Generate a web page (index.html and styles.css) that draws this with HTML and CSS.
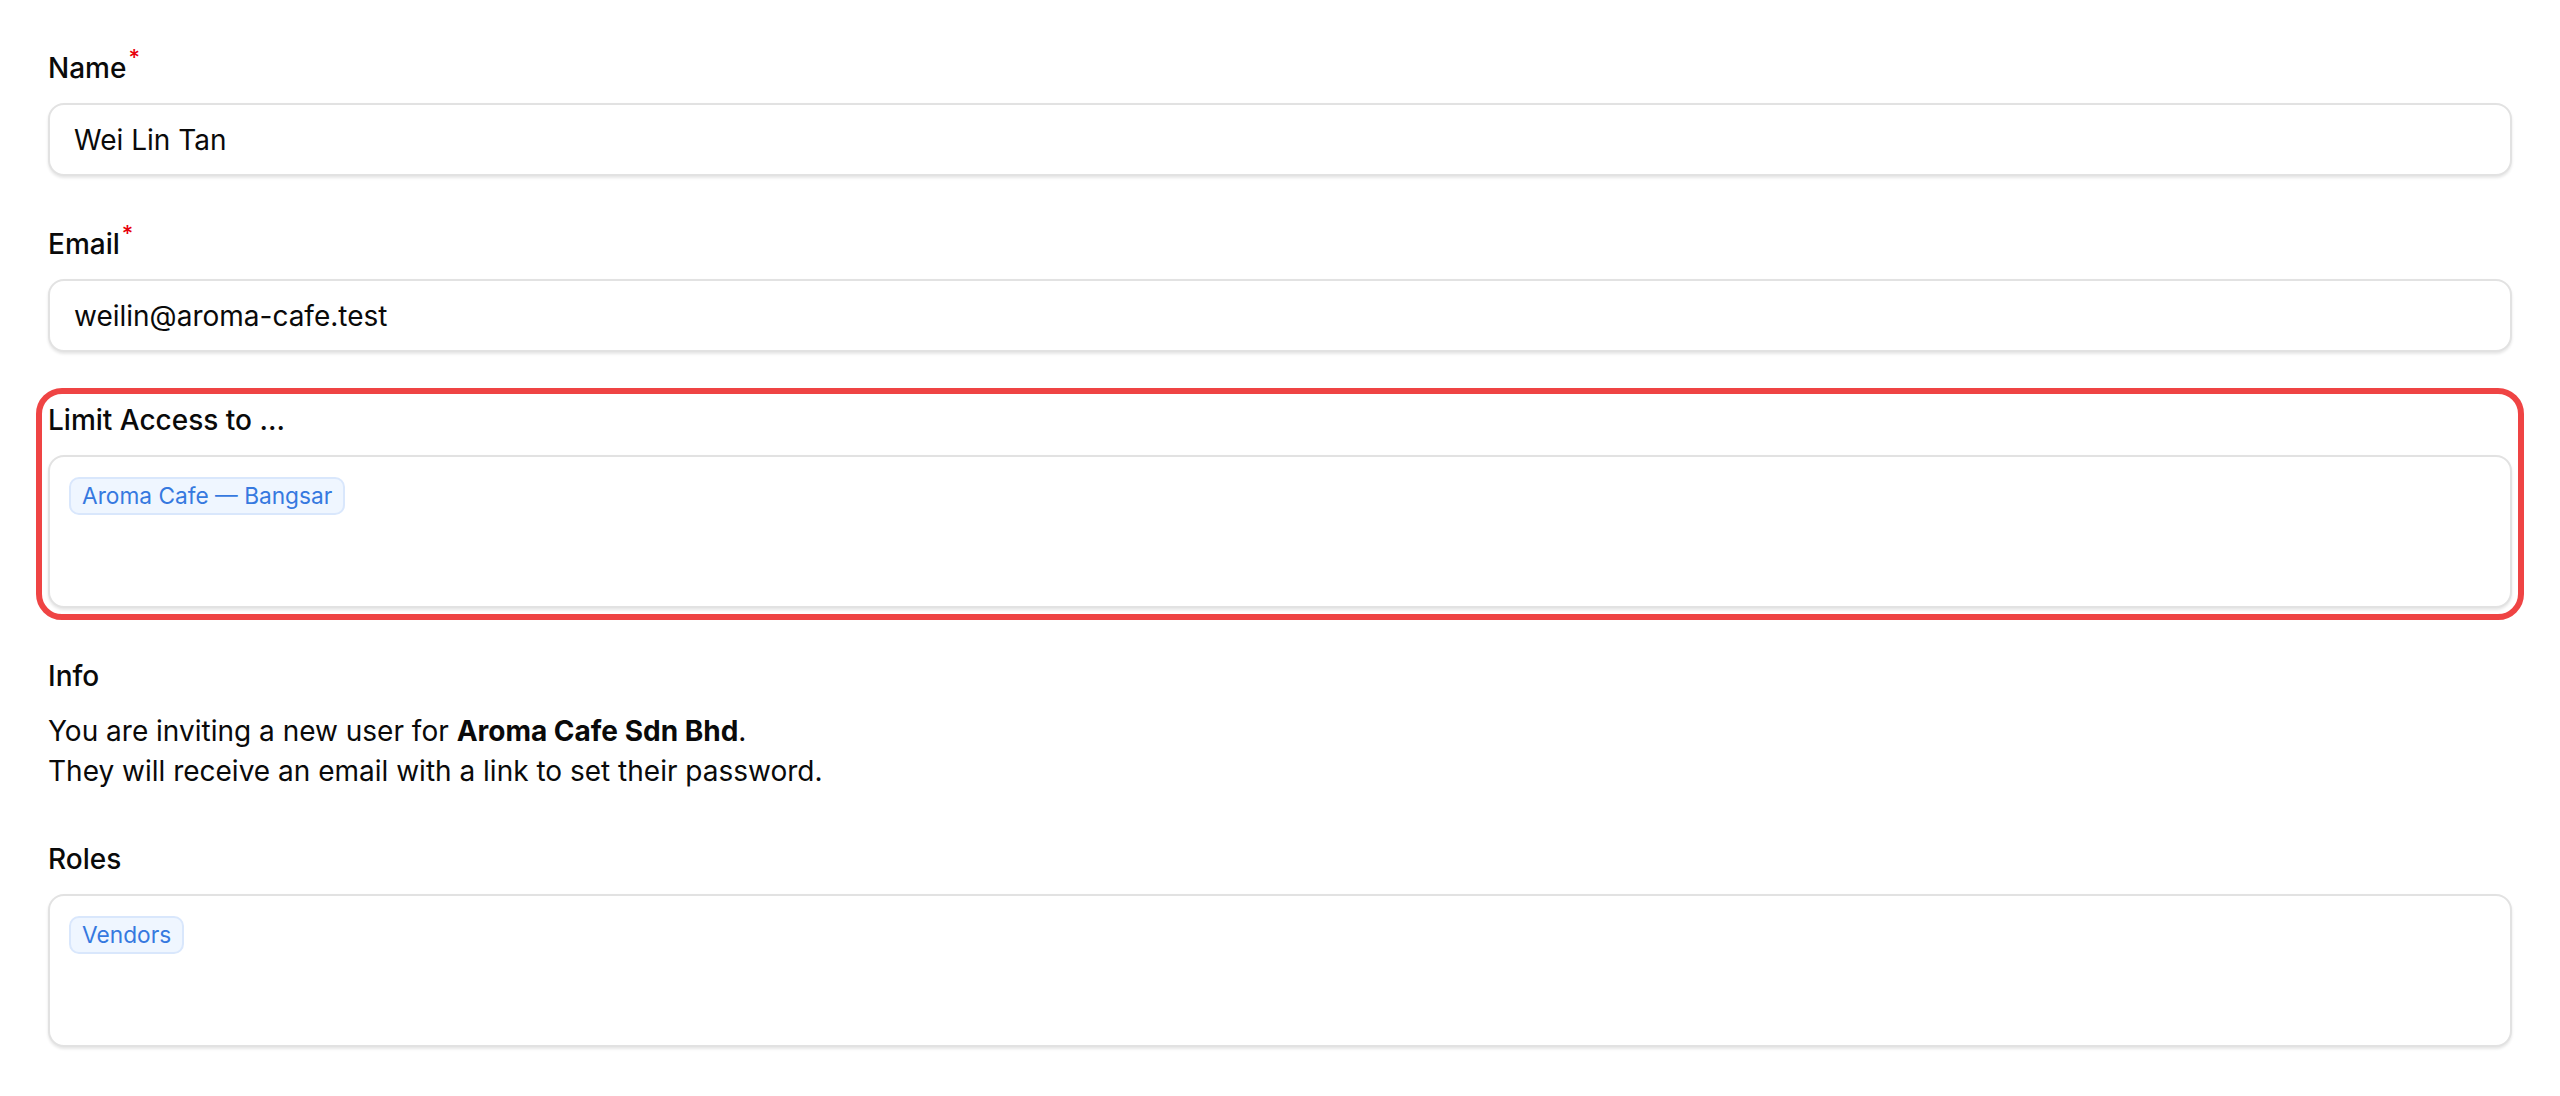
FILE: index.html
```html
<!DOCTYPE html>
<html lang="en">
<head>
<meta charset="utf-8">
<title>Invite user</title>
<link rel="stylesheet" href="styles.css">
</head>
<body>
<form class="form">
  <div class="field">
    <label class="label">Name<sup class="req">*</sup></label>
    <div class="input">Wei Lin Tan</div>
  </div>
  <div class="field">
    <label class="label">Email<sup class="req">*</sup></label>
    <div class="input">weilin@aroma-cafe.test</div>
  </div>
  <div class="field highlight">
    <label class="label">Limit Access to ...</label>
    <div class="multi">
      <span class="tag">Aroma Cafe — Bangsar</span>
    </div>
  </div>
  <div class="field">
    <div class="label">Info</div>
    <p class="info">You are inviting a new user for <strong>Aroma Cafe Sdn Bhd</strong>.<br>They will receive an email with a link to set their password.</p>
  </div>
  <div class="field">
    <label class="label">Roles</label>
    <div class="multi">
      <span class="tag">Vendors</span>
    </div>
  </div>
</form>
</body>
</html>
```

FILE: styles.css
```css
* { box-sizing: border-box; }

html, body {
  margin: 0;
  background: #ffffff;
}

body {
  font-family: Inter, "Noto Sans", "Liberation Sans", sans-serif;
  color: #0a0a0a;
}

.form {
  display: flex;
  flex-direction: column;
  gap: 48px;
  padding: 48px;
}

.field {
  display: flex;
  flex-direction: column;
  gap: 15px;
}

.label {
  display: block;
  font-size: 28px;
  line-height: 40px;
  font-weight: 500;
  color: #0a0a0a;
}

.req {
  color: #e7000b;
  font-size: 22px;
  line-height: 0;
  vertical-align: 0;
  position: relative;
  top: -13px;
  margin-left: 2px;
}

.input {
  height: 73px;
  border: 2px solid #e2e2e2;
  border-radius: 16px;
  box-shadow: 0 2px 3px rgba(0, 0, 0, 0.1);
  padding: 0 24px;
  display: flex;
  align-items: center;
  font-size: 28px;
  color: #0a0a0a;
  background: #ffffff;
}

.multi {
  height: 153px;
  border: 2px solid #e2e2e2;
  border-radius: 16px;
  box-shadow: 0 2px 3px rgba(0, 0, 0, 0.1);
  padding: 20px 19px;
  display: flex;
  flex-wrap: wrap;
  align-items: flex-start;
  gap: 8px;
  background: #ffffff;
}

.tag {
  display: inline-block;
  font-size: 22.7px;
  line-height: 32px;
  padding: 1px 11px;
  color: #3679df;
  background: #eff6ff;
  border: 2px solid #d9e7fc;
  border-radius: 10px;
  white-space: nowrap;
}

.highlight {
  outline: 6px solid #ef4444;
  outline-offset: 6px;
  border-radius: 14px;
}

.info {
  margin: 0;
  font-size: 28px;
  line-height: 40px;
  color: #0a0a0a;
}

.info strong {
  font-weight: 700;
}
```
